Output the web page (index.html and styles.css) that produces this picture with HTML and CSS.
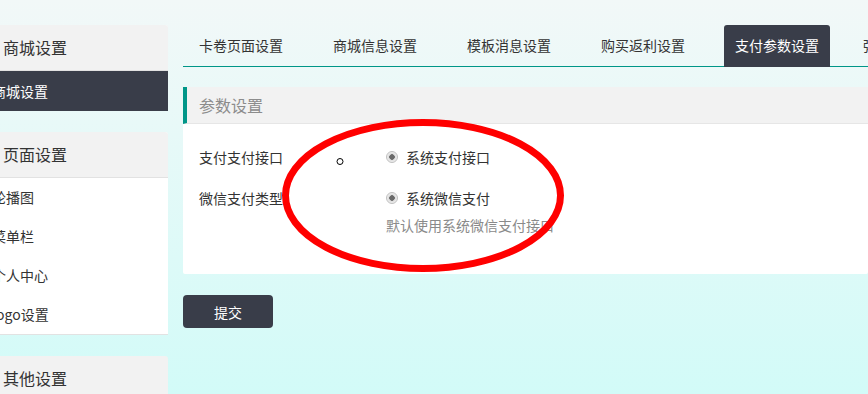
FILE: index.html
```html
<!DOCTYPE html>
<html lang="zh">
<head>
<meta charset="utf-8">
<title>支付参数设置</title>
<link rel="stylesheet" href="styles.css">
</head>
<body>
<div class="page">
  <aside class="sidebar">
    <div class="card card-first">
      <div class="card-head">商城设置</div>
      <div class="card-item active">商城设置</div>
    </div>
    <div class="card">
      <div class="card-head">页面设置</div>
      <div class="card-item">轮播图</div>
      <div class="card-item">菜单栏</div>
      <div class="card-item">个人中心</div>
      <div class="card-item">logo设置</div>
    </div>
    <div class="card">
      <div class="card-head">其他设置</div>
    </div>
  </aside>
  <main class="main">
    <ul class="tabs">
      <li class="tab">卡卷页面设置</li>
      <li class="tab">商城信息设置</li>
      <li class="tab">模板消息设置</li>
      <li class="tab">购买返利设置</li>
      <li class="tab tab-active">支付参数设置</li>
      <li class="tab tab-last">弹窗设置</li>
    </ul>
    <section class="panel">
      <div class="panel-head">参数设置</div>
      <div class="panel-body">
        <div class="form-row">
          <div class="form-label">支付支付接口</div>
          <div class="form-field">
            <label class="radio"><span class="radio-dot"></span>系统支付接口</label>
          </div>
        </div>
        <div class="form-row row-second">
          <div class="form-label">微信支付类型</div>
          <div class="form-field">
            <label class="radio"><span class="radio-dot"></span>系统微信支付</label>
            <div class="form-help">默认使用系统微信支付接口</div>
          </div>
        </div>
      </div>
    </section>
    <button class="btn">提交</button>
  </main>
</div>
<svg class="annotation" width="868" height="394" viewBox="0 0 868 394">
  <ellipse cx="423" cy="195.5" rx="137.5" ry="73" fill="none" stroke="#ff0000" stroke-width="7"/>
  <circle cx="340" cy="161.5" r="3" fill="#fff" stroke="#000" stroke-width="1"/>
</svg>
</body>
</html>
```

FILE: styles.css
```css
* { box-sizing: border-box; }
html, body {
  margin: 0;
  padding: 0;
  width: 868px;
  height: 394px;
  overflow: hidden;
}
body {
  font-family: "Noto Sans CJK SC", "Noto Sans", sans-serif;
  font-size: 14px;
  color: #333;
  background: linear-gradient(#f2f8f8, #d2fbf8);
  position: relative;
}
.page {
  display: flex;
  align-items: flex-start;
  padding-top: 25px;
}
.sidebar {
  width: 200px;
  margin-left: -32px;
  flex: none;
  display: flex;
  flex-direction: column;
  gap: 21px;
}
.card {
  background: #fff;
  border-radius: 3px 3px 0 0;
  overflow: hidden;
  border-bottom: 1px solid #e2e2e2;
}
.card-first {
  border-bottom: 0;
}
.card-head {
  height: 46px;
  line-height: 45px;
  padding-left: 35px;
  font-size: 16px;
  background: #f2f2f2;
  border-bottom: 1px solid #e2e2e2;
}
.card-item {
  height: 39px;
  line-height: 39px;
  padding-left: 24px;
  font-size: 14px;
  color: #333;
}
.card-item.active {
  height: 40px;
  line-height: 40px;
  background: #393d49;
  color: #fff;
}
.main {
  margin-left: 15px;
  flex: 1;
  min-width: 0;
  overflow: hidden;
}
.tabs {
  list-style: none;
  margin: 0;
  padding: 0 0 0 5px;
  display: flex;
  gap: 28px;
  height: 42px;
  border-bottom: 1px solid #009688;
  white-space: nowrap;
}
.tab {
  flex: none;
  height: 42px;
  line-height: 41px;
  padding: 0 11px;
  color: #333;
  border-radius: 3px 3px 0 0;
}
.tab-active {
  background: #393d49;
  color: #fff;
}
.tab-last {
  margin-left: -6px;
}
.panel {
  margin-top: 20px;
  background: #fff;
  border-radius: 2px;
}
.panel-head {
  height: 37px;
  line-height: 36px;
  padding-left: 12px;
  background: #f2f2f2;
  border-left: 4px solid #009688;
  border-bottom: 1px solid #e6e6e6;
  color: #8c8c8c;
  font-size: 16px;
}
.panel-body {
  padding: 20px 16px 39px;
}
.form-row {
  display: flex;
  align-items: flex-start;
}
.row-second {
  margin-top: 15px;
}
.form-label {
  width: 187px;
  flex: none;
  line-height: 26px;
  color: #333;
}
.form-field {
  display: flex;
  flex-direction: column;
}
.radio {
  display: flex;
  align-items: center;
  line-height: 26px;
  color: #333;
}
.radio-dot {
  width: 12px;
  height: 12px;
  margin-right: 8px;
  border-radius: 50%;
  border: 1px solid #c0c0c0;
  background: radial-gradient(circle, #6a6a6a 0 2.5px, #dcdcdc 3px, #eeeeee 5px);
}
.form-help {
  line-height: 20px;
  margin-top: 4px;
  color: #8a8a8a;
}
.btn {
  margin-top: 21px;
  width: 90px;
  height: 33px;
  border: 0;
  border-radius: 4px;
  background: #393d49;
  color: #fff;
  font-family: "Noto Sans CJK SC", "Noto Sans", sans-serif;
  font-size: 14px;
  padding: 0;
  display: block;
}
.annotation {
  position: absolute;
  left: 0;
  top: 0;
  pointer-events: none;
}
```
